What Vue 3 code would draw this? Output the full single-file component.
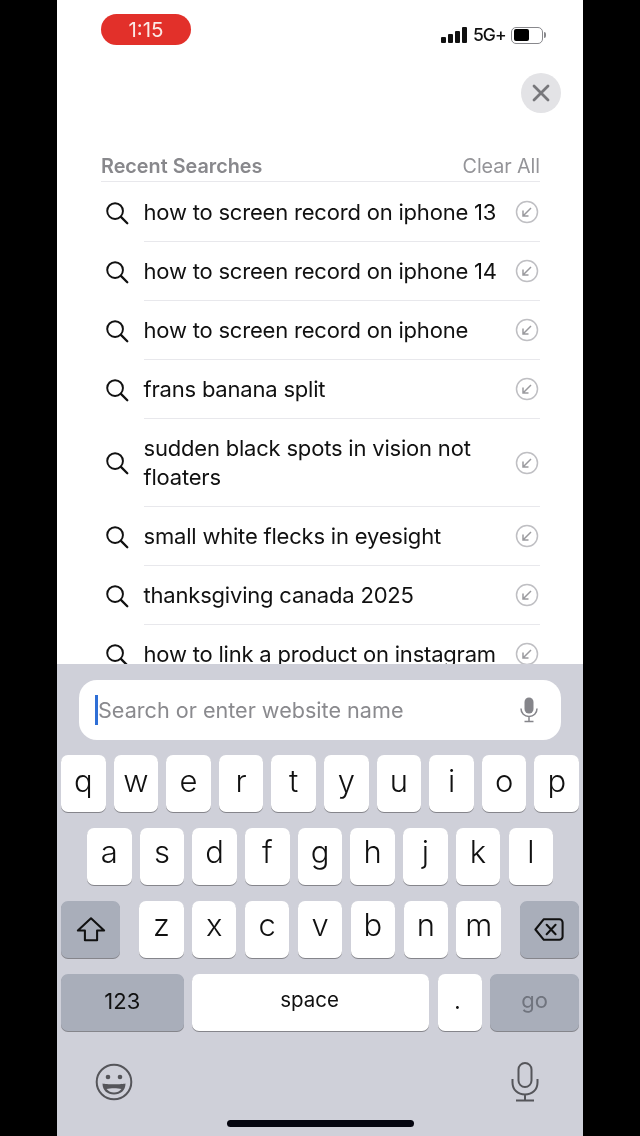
<script setup>
const searches = [
  { id: 1, text: 'how to screen record on iphone 13' },
  { id: 2, text: 'how to screen record on iphone 14' },
  { id: 3, text: 'how to screen record on iphone' },
  { id: 4, text: 'frans banana split' },
  { id: 5, text: 'sudden black spots in vision not floaters' },
  { id: 6, text: 'small white flecks in eyesight' },
  { id: 7, text: 'thanksgiving canada 2025' },
  { id: 8, text: 'how to link a product on instagram' }
]
const row1 = ['q', 'w', 'e', 'r', 't', 'y', 'u', 'i', 'o', 'p']
const row2 = ['a', 's', 'd', 'f', 'g', 'h', 'j', 'k', 'l']
const row3 = ['z', 'x', 'c', 'v', 'b', 'n', 'm']
</script>

<template>
  <div class="stage">
    <div class="phone">
      <div class="top">
        <div class="status">
          <div class="pill">1:15</div>
          <div class="indicators">
            <div class="bars"><i class="b1"></i><i class="b2"></i><i class="b3"></i><i class="b4"></i></div>
            <span class="net">5G+</span>
            <div class="battery"><div class="battery-body"><div class="battery-fill"></div></div><div class="battery-cap"></div></div>
          </div>
        </div>
        <div class="close-row">
          <div class="close">
            <svg width="18" height="18" viewBox="0 0 18 18"><path d="M2 2l14 14M16 2L2 16" stroke="#77777b" stroke-width="2.8" stroke-linecap="round" fill="none"/></svg>
          </div>
        </div>
        <div class="head">
          <span class="head-title">Recent Searches</span>
          <span class="head-clear">Clear All</span>
        </div>
      </div>

      <div class="list">
        <div v-for="s in searches" :key="s.id" class="row">
          <svg class="mag" width="24" height="24" viewBox="0 0 25 25"><circle cx="10.5" cy="10.5" r="8.2" fill="none" stroke="#111" stroke-width="2"/><path d="M16.6 16.6l6.6 6.6" stroke="#111" stroke-width="2.4" stroke-linecap="round"/></svg>
          <div class="row-body">
            <span class="row-text">{{ s.text }}</span>
            <svg class="fill-in" width="24" height="24" viewBox="0 0 24 24"><circle cx="12" cy="12" r="10.5" fill="none" stroke="#bfbfc3" stroke-width="1.5"/><path d="M16 8l-8 8M8 10.5V16h5.5" fill="none" stroke="#9a9a9e" stroke-width="1.5"/></svg>
          </div>
        </div>
      </div>

      <div class="keyboard">
        <div class="field">
          <div class="caret"></div>
          <span class="placeholder">Search or enter website name</span>
          <svg class="field-mic" width="20" height="26" viewBox="0 0 20 26"><rect x="5.5" y="0.5" width="9" height="16" rx="4.5" fill="#85858a"/><path d="M2 11.5c0 4.800 3.400 8 8 8s8-3.200 8-8M10 19.500V24M5.500 24.500h9" fill="none" stroke="#85858a" stroke-width="1.500"/></svg>
        </div>

        <div class="keys">
          <div class="key-row">
            <div v-for="k in row1" :key="k" class="key letter">{{ k }}</div>
          </div>
          <div class="key-row inset raised">
            <div v-for="k in row2" :key="k" class="key letter">{{ k }}</div>
          </div>
          <div class="key-row raised">
            <div class="key dark shift">
              <svg width="30" height="27" viewBox="0 0 32 28"><path d="M16 2L2 15h7.500v10.500h13V15H30z" fill="none" stroke="#111" stroke-width="2.200" stroke-linejoin="round"/></svg>
            </div>
            <div class="mid">
              <div v-for="k in row3" :key="k" class="key letter">{{ k }}</div>
            </div>
            <div class="key dark del">
              <svg width="30" height="25" viewBox="0 0 32 26"><path d="M10.500 2H27a3.500 3.500 0 0 1 3.500 3.500v15A3.500 3.500 0 0 1 27 24H10.500L1.500 13z" fill="none" stroke="#111" stroke-width="2.200" stroke-linejoin="round"/><path d="M13.500 8l9.500 10M23 8l-9.500 10" fill="none" stroke="#111" stroke-width="2.200" stroke-linecap="round"/></svg>
            </div>
          </div>
          <div class="key-row bottom-row">
            <div class="key dark num">123</div>
            <div class="key space">space</div>
            <div class="key dot">.</div>
            <div class="key dark go">go</div>
          </div>
        </div>

        <div class="extras">
          <svg width="38" height="38" viewBox="0 0 38 38"><circle cx="19" cy="19" r="17.300" fill="none" stroke="#55555a" stroke-width="2"/><circle cx="13" cy="14" r="2.300" fill="#55555a"/><circle cx="25" cy="14" r="2.300" fill="#55555a"/><path d="M7.500 20.500c3 1 20 1 23 0 0 7-5 11-11.500 11s-11.500-4-11.500-11z" fill="#55555a"/><path d="M11.500 26c4-1 11-1 15 0-2 2.500-4.500 3.500-7.500 3.500s-5.500-1-7.500-3.500z" fill="#cfd0d9"/></svg>
          <svg class="big-mic" width="28" height="40" viewBox="0 0 28 40"><rect x="7.500" y="1" width="13" height="24" rx="6.500" fill="none" stroke="#55555a" stroke-width="2"/><path d="M1.500 17v3.500c0 7.500 5.500 12 12.500 12s12.500-4.500 12.500-12V17M14 32.500V38M5 38.500h18" fill="none" stroke="#55555a" stroke-width="2"/></svg>
        </div>

        <div class="home"></div>
      </div>
    </div>
  </div>
</template>

<style>
html, body { margin: 0; background: #000; }
</style>

<style scoped>
.stage {
  width: 640px;
  height: 1136px;
  background: #000;
  display: flex;
  justify-content: center;
  overflow: hidden;
  font-family: Inter, "Liberation Sans", sans-serif;
  color: #111;
}
.phone {
  width: 526px;
  height: 1136px;
  background: #fff;
  display: flex;
  flex-direction: column;
  filter: blur(0.35px);
}
.top { flex: none; }
.status {
  height: 73px;
  box-sizing: border-box;
  padding: 14px 37px 0 44px;
  display: flex;
  justify-content: space-between;
  align-items: flex-start;
}
.pill {
  width: 90px;
  height: 31px;
  border-radius: 16px;
  background: #e2302a;
  color: #fbe9e6;
  font-size: 20.500px;
  line-height: 32px;
  text-align: center;
}
.indicators {
  display: flex;
  align-items: center;
  margin-top: 12px;
  height: 18px;
}
.bars {
  display: flex;
  align-items: flex-end;
  gap: 2px;
  height: 16px;
  width: 26px;
}
.bars i { display: block; width: 5px; background: #111; border-radius: 1px; }
.b1 { height: 6px; }
.b2 { height: 9px; }
.b3 { height: 12px; }
.b4 { height: 16px; }
.net {
  font-size: 17.500px;
  font-weight: 500;
  letter-spacing: -1px;
  margin-left: 6px;
  width: 33px;
  line-height: 18px;
}
.battery { display: flex; align-items: center; margin-left: 5px; }
.battery-body {
  width: 32px;
  height: 17px;
  box-sizing: border-box;
  border: 1.5px solid #88888c;
  border-radius: 5px;
  padding: 1.500px;
}
.battery-fill { width: 15px; height: 100%; background: #000; border-radius: 2px; }
.battery-cap { width: 2px; height: 6px; background: #88888c; border-radius: 0 2px 2px 0; margin-left: 1px; }
.close-row {
  height: 40px;
  display: flex;
  justify-content: flex-end;
  padding-right: 22px;
}
.close {
  width: 40px;
  height: 40px;
  border-radius: 50%;
  background: #e3e3e6;
  display: flex;
  align-items: center;
  justify-content: center;
}
.head {
  height: 69px;
  box-sizing: border-box;
  margin: 0 43px 0 44px;
  display: flex;
  justify-content: space-between;
  align-items: flex-end;
  padding-bottom: 2px;
  border-bottom: 1px solid #e8e8ec;
  font-size: 19.800px;
  line-height: 26px;
  color: #88888c;
}
.head-title { font-weight: 600; }
.head-clear { font-weight: 400; letter-spacing: -0.1px; color: #949498; }

.list {
  flex: 1;
  min-height: 0;
  overflow: hidden;
  padding: 1px 43px 0 44px;
}
.row { display: flex; align-items: center; }
.mag { flex: none; margin: 0 15px 0 4px; }
.row-body {
  flex: 1;
  min-width: 0;
  display: flex;
  align-items: center;
  padding: 14.500px 0;
  border-bottom: 1px solid #e8e8ec;
}
.row-text {
  flex: 1;
  font-size: 22px;
  letter-spacing: -0.2px;
  line-height: 29px;
  padding-right: 14px;
  margin-left: -0.5px;
}
.fill-in { flex: none; margin-right: 1px; }

.keyboard {
  flex: none;
  height: 472px;
  box-sizing: border-box;
  background: #cfd0d9;
  padding-top: 16px;
  display: flex;
  flex-direction: column;
}
.field {
  height: 60px;
  margin: 0 22px;
  border-radius: 18px;
  background: #fff;
  display: flex;
  align-items: center;
  padding: 0 22px 0 16px;
}
.caret { width: 3px; height: 30px; background: #2f6fd6; flex: none; }
.placeholder {
  flex: 1;
  font-size: 21.600px;
  color: #8a8a8e;
}
.field-mic { flex: none; }

.keys {
  margin-top: 15px;
  padding: 0 4px;
  display: flex;
  flex-direction: column;
  gap: 16px;
}
.key-row { display: flex; justify-content: space-between; height: 57px; }
.key-row.inset { padding: 0 26px 0 26px; }
.mid { display: flex; gap: 8.400px; }
.key {
  height: 57px;
  border-radius: 7px;
  background: #fff;
  box-shadow: 0 1px 0 #85858b;
  display: flex;
  align-items: center;
  justify-content: center;
}
.letter { width: 44.500px; font-size: 31px; line-height: 1; padding-bottom: 7px; box-sizing: border-box; font-weight: 300; }
.raised .letter { padding-bottom: 10px; }
.dark { background: #a9aeba; }
.shift { width: 59px; }
.del { width: 59px; padding-right: 2px; box-sizing: border-box; }
.bottom-row { gap: 8.500px; }
.num { width: 122.500px; font-size: 22px; flex: none; padding-bottom: 4px; box-sizing: border-box; }
.space { flex: 1; font-size: 20.500px; padding-bottom: 6px; box-sizing: border-box; padding-right: 2px; }
.dot { width: 44px; font-size: 22px; flex: none; padding: 0 4px 3px 0; box-sizing: border-box; }
.go { width: 89px; font-size: 22px; color: #70747e; flex: none; padding-bottom: 6px; box-sizing: border-box; }

.extras {
  margin-top: 31px;
  padding: 0 44px 0 38px;
  display: flex;
  justify-content: space-between;
  align-items: center;
  height: 40px;
}
.home {
  width: 187px;
  height: 7px;
  border-radius: 4px;
  background: #05050f;
  margin: 18px auto 0;
}
</style>
